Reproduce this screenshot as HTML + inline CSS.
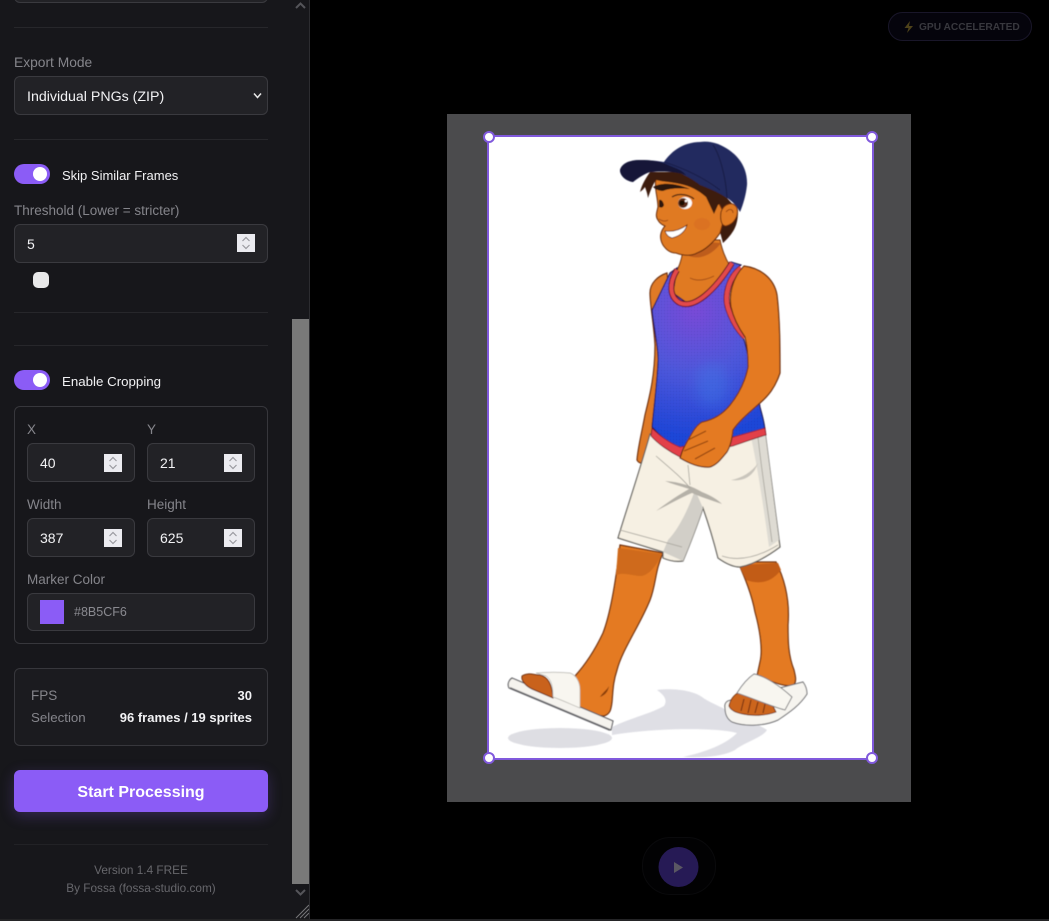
<!DOCTYPE html>
<html><head><meta charset="utf-8"><style>
html,body{margin:0;padding:0;background:#000;width:1049px;height:921px;overflow:hidden;font-family:"Liberation Sans","Noto Sans CJK JP",sans-serif}
.a{position:absolute;box-sizing:border-box}
.t{position:absolute;white-space:nowrap;line-height:18px;font-size:13.5px;color:#f2f2f4}
.l{color:#85858b}
.h{height:1px;left:14px;width:254px;background:#27272b}
.i{background:#222226;border:1px solid #3a3a3f;border-radius:6px}
.s{position:absolute;width:18px;height:18px;background:#ebebf0}
.tg{left:14px;width:36px;height:20px;border-radius:10px;background:#8b5cf6}
.tg i{position:absolute;left:19px;top:3px;width:14px;height:14px;border-radius:50%;background:#fff}
</style></head><body>
<div class="a" style="left:0;top:0;width:310px;height:921px;background:#17171b;border-right:1px solid #2c2c30"></div>
<div class="a i" style="left:14px;top:-30px;width:254px;height:33px"></div>
<div class="a h" style="top:27px"></div>
<div class="t l" style="left:14px;top:54px;font-size:13.8px">Export Mode</div>
<div class="a i" style="left:14px;top:76px;width:254px;height:39px"></div>
<div class="t" style="left:27px;top:88px;font-size:14.2px">Individual PNGs (ZIP)</div>
<svg class="a" style="left:252px;top:92px" width="12" height="8"><path d="M2 1.500L5.500 5.500L9 1.500" fill="none" stroke="#e8e8e8" stroke-width="1.500"/></svg>
<div class="a h" style="top:139px"></div>
<div class="a tg" style="top:164px"><i></i></div>
<div class="t" style="left:62px;top:167px;font-size:13px">Skip Similar Frames</div>
<div class="t l" style="left:14px;top:202px">Threshold (Lower = stricter)</div>
<div class="a i" style="left:14px;top:224px;width:254px;height:39px"></div>
<div class="t" style="left:27px;top:235px;font-size:14px">5</div>
<div class="s" style="left:237px;top:234px"><svg width="18" height="18"><path d="M5.500 7L9 3.500L12.500 7M5.500 11L9 14.500L12.500 11" fill="none" stroke="#9a9aa0" stroke-width="1.200"/></svg></div>
<div class="a" style="left:33px;top:272px;width:16px;height:16px;border-radius:5px;background:#e9e9ea"></div>
<div class="a h" style="top:312px"></div>
<div class="a h" style="top:345px"></div>
<div class="a tg" style="top:370px"><i></i></div>
<div class="t" style="left:62px;top:373px;font-size:13.3px">Enable Cropping</div>
<div class="a" style="left:14px;top:406px;width:254px;height:238px;border:1px solid #37373c;border-radius:6px"></div>
<div class="t l" style="left:27px;top:421px">X</div>
<div class="t l" style="left:147px;top:421px">Y</div>
<div class="a i" style="left:27px;top:443px;width:108px;height:39px"></div>
<div class="a i" style="left:147px;top:443px;width:108px;height:39px"></div>
<div class="t" style="left:40px;top:454px;font-size:14px">40</div>
<div class="t" style="left:160px;top:454px;font-size:14px">21</div>
<div class="s" style="left:104px;top:454px"><svg width="18" height="18"><path d="M5.500 7L9 3.500L12.500 7M5.500 11L9 14.500L12.500 11" fill="none" stroke="#9a9aa0" stroke-width="1.200"/></svg></div>
<div class="s" style="left:224px;top:454px"><svg width="18" height="18"><path d="M5.500 7L9 3.500L12.500 7M5.500 11L9 14.500L12.500 11" fill="none" stroke="#9a9aa0" stroke-width="1.200"/></svg></div>
<div class="t l" style="left:27px;top:496px">Width</div>
<div class="t l" style="left:147px;top:496px">Height</div>
<div class="a i" style="left:27px;top:518px;width:108px;height:39px"></div>
<div class="a i" style="left:147px;top:518px;width:108px;height:39px"></div>
<div class="t" style="left:40px;top:529px;font-size:14px">387</div>
<div class="t" style="left:160px;top:529px;font-size:14px">625</div>
<div class="s" style="left:104px;top:529px"><svg width="18" height="18"><path d="M5.500 7L9 3.500L12.500 7M5.500 11L9 14.500L12.500 11" fill="none" stroke="#9a9aa0" stroke-width="1.200"/></svg></div>
<div class="s" style="left:224px;top:529px"><svg width="18" height="18"><path d="M5.500 7L9 3.500L12.500 7M5.500 11L9 14.500L12.500 11" fill="none" stroke="#9a9aa0" stroke-width="1.200"/></svg></div>
<div class="t l" style="left:27px;top:571px">Marker Color</div>
<div class="a i" style="left:27px;top:593px;width:228px;height:38px"></div>
<div class="a" style="left:40px;top:600px;width:24px;height:24px;background:#8b5cf6"></div>
<div class="t" style="left:74px;top:603px;font-size:12.500px;color:#8a8a90">#8B5CF6</div>
<div class="a" style="left:14px;top:668px;width:254px;height:78px;border:1px solid #37373c;border-radius:6px;background:#1b1b1f"></div>
<div class="t l" style="left:31px;top:687px">FPS</div>
<div class="t" style="right:797px;top:687px;font-weight:bold;font-size:13px">30</div>
<div class="t l" style="left:31px;top:709px;font-size:13.3px">Selection</div>
<div class="t" style="right:797px;top:709px;font-weight:bold;font-size:13px">96 frames / 19 sprites</div>
<div class="a" style="left:14px;top:770px;width:254px;height:42px;border-radius:6px;background:#8b5cf6;box-shadow:0 4px 14px rgba(139,92,246,.25)"></div>
<div class="t" style="left:14px;width:254px;text-align:center;top:784px;font-weight:bold;font-size:16px;color:#fff">Start Processing</div>
<div class="a h" style="top:844px;background:#222226"></div>
<div class="t" style="left:14px;width:254px;text-align:center;top:861px;font-size:11.8px;color:#67676c">Version 1.4 FREE</div>
<div class="t" style="left:14px;width:254px;text-align:center;top:879px;font-size:11.8px;color:#67676c">By Fossa (fossa-studio.com)</div>
<div class="a" style="left:292px;top:319px;width:17px;height:565px;background:#797979"></div>
<svg class="a" style="left:292px;top:0" width="17" height="921">
<path d="M4 8L8.500 3.500L13 8" fill="none" stroke="#55555a" stroke-width="2"/>
<path d="M4 890L8.500 894.500L13 890" fill="none" stroke="#55555a" stroke-width="2"/>
<path d="M4 918L17 905M8 918L17 909M12 918L17 913" stroke="#77777a" stroke-width="1"/>
</svg>
<div class="a" style="left:0;top:919px;width:1049px;height:2px;background:#242426"></div>

<div class="a" style="left:888px;top:12px;width:144px;height:29px;border-radius:15px;background:#05040c;border:1px solid #191629"></div>
<svg class="a" style="left:902px;top:20px" width="14" height="14"><path d="M8 1L2.500 8H6.500L5 13L11 6H7Z" fill="#4e421a"/></svg>
<div class="t" style="left:919px;top:19px;font-size:10.200px;font-weight:bold;color:#38383e">GPU ACCELERATED</div>

<div class="a" style="left:447px;top:114px;width:464px;height:688px;background:#4b4b4d"></div>
<div class="a" style="left:487px;top:135px;width:387px;height:625px;background:#fff;border:2px solid #8059dc"></div>

<svg class="a" style="left:0;top:0" width="1049" height="921" viewBox="0 0 1049 921">
<defs>
<radialGradient id="tank" gradientUnits="userSpaceOnUse" cx="695" cy="310" r="125">
<stop offset="0" stop-color="#7a4bd8"/><stop offset=".5" stop-color="#4f58dc"/><stop offset="1" stop-color="#1f46d8"/>
</radialGradient>
<pattern id="mesh" width="3" height="3" patternUnits="userSpaceOnUse"><circle cx="1.500" cy="1.500" r=".6" fill="#1d1a70" opacity=".22"/></pattern>
<filter id="soft" x="-5%" y="-5%" width="110%" height="110%"><feGaussianBlur stdDeviation=".45"/></filter>
<filter id="bl" x="-30%" y="-30%" width="160%" height="160%"><feGaussianBlur stdDeviation="7"/></filter>
</defs>
<g filter="url(#soft)">
<!-- shadows -->
<ellipse cx="560" cy="738" rx="52" ry="10" fill="#dedee3"/>
<path d="M612 727C630 718 650 714 664 706C668 700 664 695 657 690C672 688 692 690 702 697C712 705 745 716 767 730C762 738 745 742 735 750C722 757 700 758 683 757C705 752 725 745 737 733C720 728 660 727 612 735Z" fill="#dfdfe5"/>
<!-- rear leg -->
<path d="M620 545C616 580 610 615 603 633C595 650 585 665 575 676L568 690L580 707C588 712 596 716 604 716C610 714 611 710 612 702C613 690 613 682 617 670C622 650 640 625 650 600C656 585 655 570 663 553Z" fill="#e47a22" stroke="#6b2c0c" stroke-width="1.200"/>
<path d="M618 548L662 554C656 566 650 574 642 576C632 576 625 572 616 575Z" fill="#cf6a1c"/>
<path d="M600 697C603 692 607 690 609 686C608 692 605 695 600 697Z" fill="#8a3d10"/>
<!-- left sandal -->
<path d="M512 678L613 721L611 730L509 688C507 684 509 680 512 678Z" fill="#f5f3ee" stroke="#55555a" stroke-width="1.100"/>
<path d="M510 688L610 730" stroke="#66666a" stroke-width="1.800"/>
<path d="M522 676C528 672 534 675 540 675C548 677 552 684 553 698L532 689C526 686 521 681 522 676Z" fill="#c9621c" stroke="#6b2c0c" stroke-width="1"/>
<path d="M536 673C548 672 560 672 570 673C576 675 580 682 580 690L580 708C570 704 562 700 553 697C553 688 552 680 546 676Z" fill="#f8f6f0" stroke="#b5b3ad" stroke-width=".7"/>
<!-- front leg -->
<path d="M738 562C745 578 752 595 755 612C760 630 763 650 760 662L757 676C768 680 785 688 794 685C797 680 795 675 794 670C788 655 788 640 788 625C790 600 785 580 776 562Z" fill="#e47a22" stroke="#6b2c0c" stroke-width="1.200"/>
<path d="M739 565L778 563L781 570C772 582 760 585 746 580Z" fill="#c25c18"/>
<!-- right sandal -->
<path d="M725 708C724 702 728 700 733 700L803 682C806 686 807 690 807 694C800 705 790 712 778 720C765 726 745 727 732 722C727 719 725 714 725 708Z" fill="#f6f4ef" stroke="#66666a" stroke-width="1"/>
<path d="M729 706C730 700 734 695 738 693L773 706L776 712C765 716 752 716 743 714C737 713 731 711 729 706Z" fill="#cc651e" stroke="#6b2c0c" stroke-width=".9"/>
<path d="M744 699L741 711M751 700L748 713M758 702L755 713M765 704L763 713" stroke="#6b2c0c" stroke-width="1"/>
<path d="M754 674C765 676 780 686 792 697L785 710C770 706 755 699 737 693C742 685 748 678 754 674Z" fill="#f8f6f0" stroke="#77777a" stroke-width=".9"/>
<!-- rear arm -->
<path d="M667 273C658 276 650 283 650 293C650 305 654 325 655 345C655 375 650 395 645 415C642 432 638 447 637 460C639 464 644 464 646 461C648 452 648 444 652 436C658 410 664 380 668 350L670 300Z" fill="#e07a25" stroke="#6b2c0c" stroke-width="1.200"/>
<!-- shorts -->
<path d="M650 434C640 470 628 505 618 538L663 552L663 558C670 561 677 562 683 561C690 544 697 526 703 508C709 525 714 542 718 558C725 563 733 567 740 567C755 564 768 556 780 547C775 510 770 470 765 432L700 445Z" fill="#f6f0e3" stroke="#5f5d58" stroke-width="1.200"/>
<path d="M663 552L683 561C690 544 697 526 703 508L695 490C688 510 678 530 668 540Z" fill="#d2cfc8"/>
<path d="M751 437L765 432C770 470 775 510 779 540L769 547C764 510 758 470 751 437Z" fill="#dedbd3"/>
<path d="M665 481C680 482 692 486 702 492C712 496 718 500 722 504C710 500 698 496 692 493C680 498 668 505 656 511C668 502 680 494 689 489C680 486 672 484 665 481Z" fill="#b5b1a8"/>
<path d="M731 480C742 478 752 472 758 463C754 475 745 482 731 480Z" fill="#c9c5bc"/>
<path d="M620 530L682 547M722 556C740 562 760 556 778 545M758 437C762 475 768 510 772 542M656 456C670 468 682 478 690 488M688 465L690 485" fill="none" stroke="#a5a29a" stroke-width=".8"/>
<!-- hair back -->
<path d="M703 186L727 198L738 210C738 220 737 228 728 238L723 243L720 232L712 212Z" fill="#3c1b10"/>
<!-- neck -->
<path d="M683 250C682 258 680 266 675 274L672 292C678 303 692 305 705 297L730 266C725 258 722 250 720 240L700 240Z" fill="#e07a22" stroke="#6b2c0c" stroke-width="1"/>
<path d="M685 254C698 262 712 255 721 243L704 242Z" fill="#bd5c1a"/>
<path d="M690 278C698 282 706 280 714 276" fill="none" stroke="#9c4712" stroke-width=".8"/>
<!-- face -->
<path d="M656 178C654 188 658 198 658 207C657 212 655 216 658 220C660 224 663 225 665 226C660 232 659 238 663 245C667 251 671 253 676 253C684 256 692 256 697 253C705 250 713 243 720 233L725 215L712 190L685 172Z" fill="#e07a22" stroke="#6b2c0c" stroke-width="1.100"/>
<ellipse cx="702" cy="224" rx="8" ry="6" fill="#d05f22" opacity=".3"/>
<!-- fringe -->
<path d="M640 192C642 184 646 178 650 172L685 172L712 187L727 198L718 205L714 214L706 197C698 190 690 186 680 184C672 182 664 182 656 180C652 186 650 192 648 198C647 192 646 190 645 187C643 190 641 191 640 192Z" fill="#3c1b10"/>
<path d="M653 187C662 182 675 183 690 189C680 188 670 188 663 191C660 191 656 190 653 187Z" fill="#2a120a"/>
<ellipse cx="685" cy="203" rx="7" ry="6" fill="#fff"/>
<circle cx="683" cy="203" r="5" fill="#5a2c12"/><circle cx="682" cy="203" r="2.500" fill="#1a0a04"/><circle cx="686" cy="201" r="1.200" fill="#fff"/>
<path d="M672 197C678 193 688 194 694 199" fill="none" stroke="#3c1b10" stroke-width="1.200"/>
<path d="M659 200C661 199 663 201 664 205C663 208 661 208 659 207Z" fill="#2d140a"/>
<path d="M665 231C672 232 680 230 687 225C685 232 680 236 672 238C668 237 666 234 665 231Z" fill="#fff" stroke="#6b2c0c" stroke-width=".8"/>
<path d="M659 219C662 221 665 222 668 220" fill="none" stroke="#9c4712" stroke-width=".8"/>
<!-- ear -->
<path d="M721 212C724 203 734 201 737 208C739 216 734 224 726 226C721 226 720 219 721 212Z" fill="#e07a22" stroke="#6b2c0c" stroke-width="1"/>
<path d="M726 212C729 208 733 209 733 213" fill="none" stroke="#9c4712" stroke-width="1"/>
<!-- cap -->
<path d="M620 170C622 163 630 160 640 160C650 160 657 161 664 162C672 150 685 142 700 142C706 141 712 142 718 144C735 151 748 165 747 185C746 195 743 205 740 212C736 205 732 201 727 198C718 192 708 188 700 185C694 180 686 176 680 173C670 171 660 171 650 172C644 174 638 178 633 182C626 181 620 176 620 170Z" fill="#22295f"/>
<path d="M620 170C622 163 630 160 640 160C650 160 660 161 668 165C675 168 682 170 686 175C675 171 660 171 650 172C644 174 638 178 633 182C626 181 620 176 620 170Z" fill="#141838"/>
<path d="M664 162C680 167 700 175 720 190M713 145C720 155 726 178 727 198" fill="none" stroke="#161a42" stroke-width=".9"/>
<!-- tank -->
<path d="M670 273C664 285 658 298 652 310C654 330 658 345 658 360C657 385 654 405 652 427C660 436 670 444 680 450L765 432C765 424 762 415 760 407C758 392 754 380 750 367C748 355 746 345 743 337C738 325 734 316 730 307C727 298 726 292 727 287C730 278 735 270 741 265L731 262L707 297L687 303L673 293L677 268Z" fill="url(#tank)" stroke="#1d1648" stroke-width="1.100"/>
<path d="M670 273C664 285 658 298 652 310C654 330 658 345 658 360C657 385 654 405 652 427C660 436 670 444 680 450L765 432C765 424 762 415 760 407C758 392 754 380 750 367C748 355 746 345 743 337C738 325 734 316 730 307C727 298 726 292 727 287C730 278 735 270 741 265L731 262L707 297L687 303L673 293L677 268Z" fill="url(#mesh)"/>
<ellipse cx="712" cy="385" rx="16" ry="22" fill="#3d7be8" opacity=".4" filter="url(#bl)"/>
<path d="M677 270C669 283 669 297 680 303C695 309 715 290 732 263" fill="none" stroke="#5c1020" stroke-width="6"/>
<path d="M677 270C669 283 669 297 680 303C695 309 715 290 732 263" fill="none" stroke="#e2484c" stroke-width="4"/>
<path d="M652 428C660 436 670 443 680 447L733 437L765 428L766 435C755 438 745 442 733 446L680 457C670 452 658 444 651 436Z" fill="#e2404a" stroke="#6a1322" stroke-width=".8"/>
<path d="M741 268C729 277 724 295 728 308C732 320 738 330 745 337" fill="none" stroke="#5c1020" stroke-width="6"/>
<path d="M741 268C729 277 724 295 728 308C732 320 738 330 745 337" fill="none" stroke="#e2484c" stroke-width="4.500"/>
<!-- front arm -->
<path d="M744 266C760 268 774 278 777 295C780 320 780 350 780 373C775 388 768 396 760 403C750 412 740 420 733 430C732 440 730 447 727 452C722 458 717 465 710 467C700 468 690 464 680 458L682 452C684 446 688 440 692 433C695 428 698 424 702 422C712 420 722 415 730 405C738 395 745 382 748 367C748 355 747 345 745 337C738 327 733 316 731 307C729 295 732 278 744 266Z" fill="#e47a22" stroke="#6b2c0c" stroke-width="1.200"/>
<path d="M688 440L706 431M684 451L708 441M695 459L715 448" stroke="#8f4010" stroke-width="1"/>
</g>
<!-- handles -->
<g fill="#fff" stroke="#8059dc" stroke-width="2">
<circle cx="489" cy="137" r="5"/><circle cx="872" cy="137" r="5"/><circle cx="489" cy="758" r="5"/><circle cx="872" cy="758" r="5"/>
</g>
<!-- play -->
<rect x="642.500" y="837.500" width="73" height="57" rx="28" fill="#020203" stroke="#0a0a0c"/>
<circle cx="678.500" cy="867" r="20" fill="#261a55"/>
<path d="M674 862L683 867.500L674 873Z" fill="#5a5763"/>
</svg>
</body></html>
